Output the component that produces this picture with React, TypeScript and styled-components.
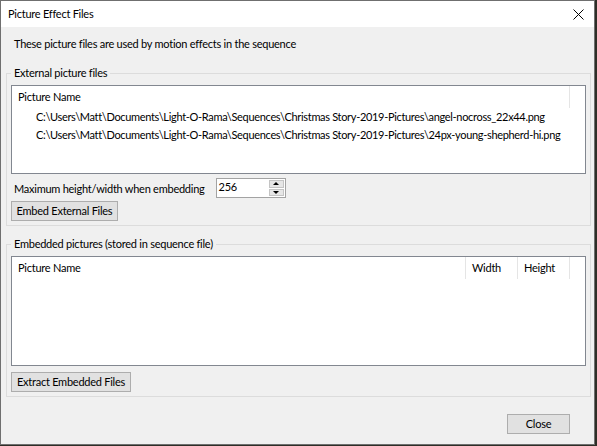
import styled, { createGlobalStyle } from 'styled-components';

const Global = createGlobalStyle`
  html, body {
    margin: 0;
    padding: 0;
    background: #2e2e27;
  }
  body {
    font-family: Lato, "Liberation Sans", sans-serif;
    font-size: 11px;
    letter-spacing: -0.25px;
    color: #000;
  }
`;

const Window = styled.div`
  width: 595px;
  height: 445px;
  box-sizing: border-box;
  border: 1px solid #6f6f6f;
  background: #f0f0f0;
  display: flex;
  flex-direction: column;
`;

const TitleBar = styled.div`
  height: 26px;
  flex: none;
  background: #fff;
  display: flex;
  align-items: center;
  justify-content: space-between;
  padding-left: 7px;
`;

const Title = styled.span`
  font-size: 11px;
  line-height: 16px;
`;

const CloseX = styled.div`
  width: 22px;
  height: 26px;
  margin-right: 5px;
  display: flex;
  align-items: center;
  justify-content: center;
`;

const Body = styled.div`
  flex: 1;
  display: flex;
  flex-direction: column;
  padding: 9px 3px 0 5px;
`;

const Intro = styled.div`
  padding-left: 8px;
  line-height: 16px;
`;

const Group = styled.fieldset<{ $gap: number }>`
  margin: ${p => p.$gap}px 0 0;
  padding: 4px 4px 4px 4px;
  border: 1px solid #dcdcdc;
  min-width: 0;
  display: flex;
  flex-direction: column;
`;

const Legend = styled.legend`
  padding: 0 3px;
  line-height: 16px;
`;

const ListView = styled.div<{ $h: number }>`
  height: ${p => p.$h}px;
  box-sizing: border-box;
  background: #fff;
  border: 1px solid #828790;
  box-shadow: inset 1px 1px 0 #fff;
  display: flex;
  flex-direction: column;
  overflow: hidden;
`;

const Header = styled.div`
  display: flex;
  height: 22px;
  flex: none;
`;

const HeaderCell = styled.div<{ $w: number }>`
  width: ${p => p.$w}px;
  box-sizing: border-box;
  padding-left: 6px;
  border-right: 1px solid #e5e5e5;
  line-height: 22px;
  white-space: nowrap;
`;

const Row = styled.div`
  height: 18px;
  line-height: 18px;
  padding-left: 24px;
  letter-spacing: -0.32px;
  white-space: nowrap;
`;

const SizeRow = styled.div`
  display: flex;
  align-items: center;
  margin-top: 4px;
  height: 20px;
  padding-left: 3px;
`;

const SpinBox = styled.div`
  margin-left: 11px;
  width: 70px;
  height: 20px;
  box-sizing: border-box;
  border: 1px solid #a3a3a3;
  background: #fff;
  display: flex;
  align-items: stretch;
`;

const SpinValue = styled.div`
  flex: 1;
  padding-left: 2px;
  line-height: 16px;
`;

const SpinButtons = styled.div`
  width: 15px;
  display: flex;
  flex-direction: column;
  gap: 1px;
  padding: 1px 1px 1px 0;
`;

const SpinButton = styled.div`
  flex: 1;
  background: #e6e6e6;
  border: 1px solid #c4c4c4;
  display: flex;
  align-items: center;
  justify-content: center;
`;

const Arrow = styled.span<{ $up?: boolean }>`
  width: 0;
  height: 0;
  border-left: 3px solid transparent;
  border-right: 3px solid transparent;
  ${p => (p.$up ? 'border-bottom: 3px solid #000;' : 'border-top: 3px solid #000;')}
`;

const Button = styled.button<{ $w: number; $top: number }>`
  width: ${p => p.$w}px;
  height: 20px;
  margin-top: ${p => p.$top}px;
  padding: 0;
  background: #e1e1e1;
  border: 1px solid #adadad;
  font: inherit;
  letter-spacing: inherit;
  color: #000;
  line-height: 16px;
  white-space: nowrap;
  align-self: flex-start;
`;

const Footer = styled.div`
  display: flex;
  justify-content: flex-end;
  padding-right: 21px;
`;

const paths = [
  'C:\\Users\\Matt\\Documents\\Light-O-Rama\\Sequences\\Christmas Story-2019-Pictures\\angel-nocross_22x44.png',
  'C:\\Users\\Matt\\Documents\\Light-O-Rama\\Sequences\\Christmas Story-2019-Pictures\\24px-young-shepherd-hi.png',
];

export default function App() {
  return (
    <>
      <Global />
      <Window>
        <TitleBar>
          <Title>Picture Effect Files</Title>
          <CloseX>
            <svg width="11" height="11" viewBox="0 0 11 11">
              <path d="M0.5 0.5 L10.5 10.5 M10.5 0.5 L0.5 10.5" stroke="#000" strokeWidth="1" />
            </svg>
          </CloseX>
        </TitleBar>
        <Body>
          <Intro>These picture files are used by motion effects in the sequence</Intro>

          <Group $gap={13}>
            <Legend>External picture files</Legend>
            <ListView $h={89}>
              <Header>
                <HeaderCell $w={558}>Picture Name</HeaderCell>
              </Header>
              {paths.map(p => (
                <Row key={p}>{p}</Row>
              ))}
            </ListView>
            <SizeRow>
              Maximum height/width when embedding
              <SpinBox>
                <SpinValue>256</SpinValue>
                <SpinButtons>
                  <SpinButton>
                    <Arrow $up />
                  </SpinButton>
                  <SpinButton>
                    <Arrow />
                  </SpinButton>
                </SpinButtons>
              </SpinBox>
            </SizeRow>
            <Button $w={107} $top={3}>Embed External Files</Button>
          </Group>

          <Group $gap={10}>
            <Legend>Embedded pictures (stored in sequence file)</Legend>
            <ListView $h={110}>
              <Header>
                <HeaderCell $w={454}>Picture Name</HeaderCell>
                <HeaderCell $w={52}>Width</HeaderCell>
                <HeaderCell $w={52}>Height</HeaderCell>
              </Header>
            </ListView>
            <Button $w={120} $top={6}>Extract Embedded Files</Button>
          </Group>

          <Footer>
            <Button $w={63} $top={17}>Close</Button>
          </Footer>
        </Body>
      </Window>
    </>
  );
}
